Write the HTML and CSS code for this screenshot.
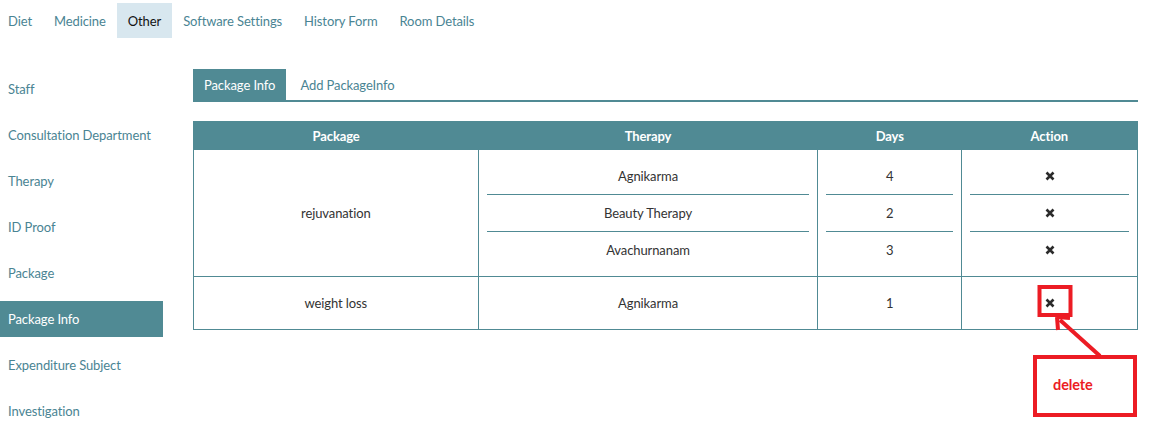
FILE: index.html
```html
<!DOCTYPE html>
<html>
<head>
<meta charset="utf-8">
<link rel="stylesheet" href="styles.css">
</head>
<body>
<nav class="topnav">
  <a class="tn">Diet</a>
  <a class="tn">Medicine</a>
  <a class="tn active">Other</a>
  <a class="tn">Software Settings</a>
  <a class="tn">History Form</a>
  <a class="tn">Room Details</a>
</nav>
<div class="main">
  <aside class="side">
    <a class="si">Staff</a>
    <a class="si">Consultation Department</a>
    <a class="si">Therapy</a>
    <a class="si">ID Proof</a>
    <a class="si">Package</a>
    <a class="si active">Package Info</a>
    <a class="si">Expenditure Subject</a>
    <a class="si">Investigation</a>
  </aside>
  <section class="content">
    <div class="tabs">
      <a class="tab active">Package Info</a>
      <a class="tab">Add PackageInfo</a>
    </div>
    <table class="grid">
      <thead>
        <tr><th class="c1">Package</th><th class="c2">Therapy</th><th class="c3">Days</th><th class="c4">Action</th></tr>
      </thead>
      <tbody>
        <tr class="r1">
          <td>rejuvanation</td>
          <td class="multi"><div class="sub">Agnikarma</div><div class="sub">Beauty Therapy</div><div class="sub">Avachurnanam</div></td>
          <td class="multi"><div class="sub">4</div><div class="sub">2</div><div class="sub">3</div></td>
          <td class="multi"><div class="sub"><svg class="x" viewBox="0 0 10 10"><path d="M1.5 1.5 L8.5 8.5 M8.5 1.5 L1.5 8.5"/></svg></div><div class="sub"><svg class="x" viewBox="0 0 10 10"><path d="M1.5 1.5 L8.5 8.5 M8.5 1.5 L1.5 8.5"/></svg></div><div class="sub"><svg class="x" viewBox="0 0 10 10"><path d="M1.5 1.5 L8.5 8.5 M8.5 1.5 L1.5 8.5"/></svg></div></td>
        </tr>
        <tr class="r2">
          <td>weight loss</td>
          <td>Agnikarma</td>
          <td>1</td>
          <td><svg class="x" viewBox="0 0 10 10"><path d="M1.5 1.5 L8.5 8.5 M8.5 1.5 L1.5 8.5"/></svg></td>
        </tr>
      </tbody>
    </table>
  </section>
</div>
<svg class="annot" width="1162" height="433" viewBox="0 0 1162 433">
  <rect x="1039.5" y="287" width="31" height="28" fill="none" stroke="#ec1c24" stroke-width="4"/>
  <line x1="1100" y1="356" x2="1060" y2="320" stroke="#ec1c24" stroke-width="4"/>
  <path d="M1057 317 L1070 318 M1057 317 L1058 330" stroke="#ec1c24" stroke-width="4" fill="none"/>
  <rect x="1035" y="357" width="100" height="58" fill="none" stroke="#ec1c24" stroke-width="4"/>
  <text x="1053" y="390" class="del">delete</text>
</svg>
</body>
</html>
```

FILE: styles.css
```css
* { box-sizing: border-box; }
body {
  margin: 0;
  font-family: Lato, "Open Sans", sans-serif;
  font-size: 13px;
  letter-spacing: -0.1px;
  color: #333;
  background: #fff;
  width: 1162px;
  height: 433px;
  overflow: hidden;
  position: relative;
}
a { text-decoration: none; cursor: pointer; }
.topnav {
  display: flex;
  margin-top: 3px;
  margin-left: -3px;
  height: 35px;
}
.tn {
  display: flex;
  align-items: center;
  padding: 0 11px;
  color: #4a8493;
}
.tn.active {
  background: #d8e7ef;
  color: #111;
}
.main {
  display: flex;
  margin-top: 33px;
}
.side {
  width: 163px;
  display: flex;
  flex-direction: column;
  gap: 10px;
}
.si {
  height: 36px;
  display: flex;
  align-items: center;
  padding-left: 8px;
  color: #4a8493;
}
.si.active {
  background: #508a94;
  color: #fff;
}
.content {
  margin-left: 30px;
  width: 945px;
  margin-top: -2px;
}
.tabs {
  display: flex;
  border-bottom: 2px solid #508a94;
  height: 33px;
}
.tab {
  display: flex;
  align-items: center;
  padding: 1px 11px 0;
  height: 31px;
  color: #4a8493;
  margin-right: 3px;
}
.tab.active {
  background: #508a94;
  color: #fff;
}
.grid {
  margin-top: 19px;
  width: 945px;
  border-collapse: collapse;
  border: 1px solid #508a94;
}
.grid th {
  background: #508a94;
  color: #fff;
  font-weight: bold;
  height: 28px;
  padding: 0;
  text-align: center;
}
.c1 { width: 285px; }
.c2 { width: 340px; }
.c3 { width: 144px; }
.c4 { width: 176px; }
.grid td {
  border: 1px solid #508a94;
  text-align: center;
  vertical-align: middle;
  padding: 0;
}
.r1 td { height: 127px; }
.r2 td { height: 53px; }
.grid td.multi { padding: 8px 8px; }
.sub {
  height: 37px;
  display: flex;
  align-items: center;
  justify-content: center;
  border-bottom: 1px solid #508a94;
}
.sub:last-child { border-bottom: none; height: 36px; }
.x {
  width: 10px;
  height: 10px;
  display: block;
  margin: 0 auto;
}
.x path {
  stroke: #2b2b2b;
  stroke-width: 2.6;
  stroke-linecap: butt;
  fill: none;
}
.annot {
  position: absolute;
  left: 0;
  top: 0;
  pointer-events: none;
}
.del {
  fill: #ec1c24;
  font-family: Lato, "Open Sans", sans-serif;
  font-weight: bold;
  font-size: 14.5px;
}
```
